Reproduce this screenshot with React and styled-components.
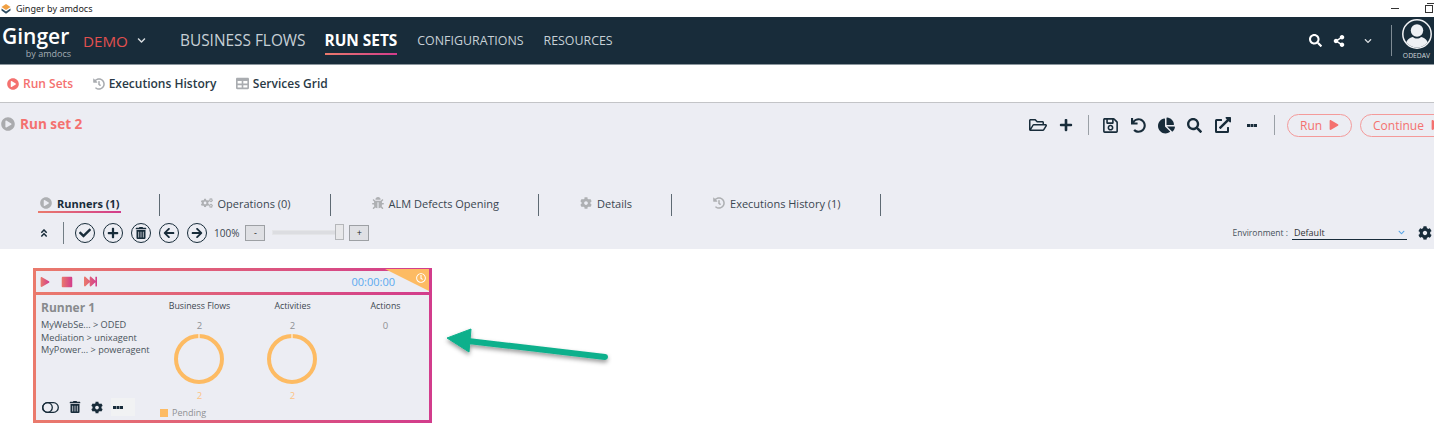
import React from 'react';
import styled, { createGlobalStyle } from 'styled-components';
import {
  FaSearch, FaShareAlt, FaPlay, FaPlus, FaUndo, FaChartPie, FaExternalLinkAlt,
  FaCog, FaCogs, FaBug, FaHistory, FaTable, FaPlayCircle, FaCheck, FaTrashAlt, FaArrowLeft,
  FaArrowRight, FaAngleDoubleUp, FaStop, FaFastForward, FaRegClock, FaRegFolderOpen, FaRegSave,
  FaChevronDown,
} from 'react-icons/fa';

const GRADIENT = 'linear-gradient(90deg, #ea7a6c, #d23c8c)';
const DARK = '#182c3a';
const CORAL = '#f4716f';

const GlobalStyle = createGlobalStyle`
  html, body {
    margin: 0;
    padding: 0;
    background: #fff;
    overflow: hidden;
  }
  body, button, select {
    font-family: "Open Sans", "Noto Sans", sans-serif;
  }
`;

const Page = styled.div`
  position: relative;
  width: 1434px;
  height: 445px;
  overflow: hidden;
  background: #fff;
`;

const TitleBar = styled.div`
  height: 17px;
  display: flex;
  align-items: center;
  padding-left: 1px;
  font-size: 9px;
  color: #222;
  font-family: "Noto Sans", sans-serif;
`;

const TitleText = styled.span`
  margin-left: 5px;
`;

const WindowControls = styled.div`
  margin-left: auto;
  display: flex;
  align-items: center;
  gap: 26px;
  padding-right: 1px;
`;

const Minimize = styled.span`
  width: 8px;
  height: 1px;
  background: #333;
`;

const Restore = styled.span`
  width: 6px;
  height: 6px;
  border: 1px solid #333;
  box-shadow: 1px -1px 0 0 #fff, 2px -2px 0 0 #333;
`;

const Nav = styled.header`
  height: 47px;
  background: ${DARK};
  border-bottom: 1px solid #8b969d;
  display: flex;
  align-items: center;
  color: #fff;
  padding-left: 2px;
`;

const Logo = styled.div`
  width: 69px;
  display: flex;
  flex-direction: column;
  align-items: flex-end;
  line-height: 1;
  padding-top: 3px;
`;

const LogoName = styled.span`
  align-self: flex-start;
  font-size: 21px;
  font-weight: 600;
  line-height: 22px;
`;

const LogoSub = styled.span`
  font-size: 9px;
  color: #a3adb4;
  line-height: 10px;
  margin-top: 2px;
`;

const Demo = styled.div`
  margin-left: 12px;
  width: 97px;
  display: flex;
  align-items: center;
  gap: 9px;
  font-size: 15.2px;
  color: #e2504f;
  svg {
    color: #d8dde0;
  }
`;

const NavLink = styled.a`
  position: relative;
  margin-right: ${p => p.$gap}px;
  font-size: ${p => p.$size}px;
  font-weight: ${p => (p.$active ? 700 : 400)};
  color: ${p => (p.$active ? '#fff' : '#c7d0d6')};
  line-height: 20px;
  white-space: nowrap;
  &::after {
    content: '';
    display: ${p => (p.$active ? 'block' : 'none')};
    position: absolute;
    left: 0;
    right: 0;
    bottom: -4px;
    height: 2px;
    background: ${GRADIENT};
  }
`;

const NavRight = styled.div`
  margin-left: auto;
  display: flex;
  align-items: center;
  height: 100%;
  color: #fff;
`;

const NavIcons = styled.div`
  display: flex;
  align-items: center;
  gap: 11px;
  padding-right: 19px;
  border-right: 1px solid #7e8b94;
  height: 31px;
`;

const NavChevron = styled.span`
  display: flex;
  margin-left: 8px;
  color: #d8dde0;
`;

const Profile = styled.div`
  width: 42px;
  box-sizing: border-box;
  padding-left: 7px;
  display: flex;
  flex-direction: column;
  align-items: center;
  height: 100%;
  font-size: 6.8px;
  color: #cfd6da;
  svg {
    margin-top: 2px;
    display: block;
    flex-shrink: 0;
  }
  span {
    line-height: 8px;
    margin-top: 3px;
  }
`;

const SubTabs = styled.nav`
  height: 37px;
  border-bottom: 1px solid #c3c4c7;
  display: flex;
  align-items: center;
  padding-left: 7px;
  gap: 19.5px;
  background: #fff;
`;

const SubTab = styled.a`
  display: flex;
  align-items: center;
  gap: 4px;
  font-size: 12px;
  font-weight: 600;
  color: ${p => (p.$active ? CORAL : '#2a3a46')};
  svg {
    color: ${p => (p.$active ? CORAL : '#a9acb0')};
  }
`;

const Panel = styled.section`
  height: 146px;
  background: #ecedf3;
  display: flex;
  flex-direction: column;
`;

const TitleRow = styled.div`
  height: 80px;
  display: flex;
  align-items: flex-start;
  padding: 10px 0 0 1px;
`;

const RunSetTitle = styled.h1`
  margin: 0 0 0 5px;
  font-size: 13.6px;
  font-weight: 700;
  color: ${CORAL};
  line-height: 22px;
`;

const TitleIcon = styled.span`
  display: flex;
  margin-top: 4px;
  color: #aaabae;
`;

const Toolbar = styled.div`
  margin-left: auto;
  display: flex;
  align-items: center;
  height: 24px;
  color: ${DARK};
  margin-right: -24px;
`;

const ToolIcon = styled.span`
  display: flex;
  justify-content: center;
  width: ${p => p.$w || 18}px;
  margin-right: ${p => p.$mr || 0}px;
`;

const ToolDivider = styled.span`
  width: 1px;
  height: 20px;
  background: #9aa0a6;
  margin: ${p => p.$m};
`;

const PillButton = styled.button`
  height: 23px;
  width: ${p => p.$w}px;
  margin-right: 8px;
  border: 1px solid #f49a9a;
  border-radius: 12px;
  background: transparent;
  color: ${CORAL};
  font-size: 12px;
  display: flex;
  align-items: center;
  gap: 7px;
  padding: 0 0 0 12px;
  flex-shrink: 0;
`;

const Tabs = styled.div`
  display: flex;
  height: 22px;
  padding-left: 38px;
  margin-top: 1px;
`;

const Tab = styled.div`
  display: flex;
  align-items: center;
  padding: 0 38px 4px 39px;
  border-right: 1px solid #5e6a73;
  &:first-child {
    padding: 0 38px 4px 0;
  }
`;

const TabLabel = styled.div`
  position: relative;
  display: flex;
  align-items: center;
  gap: 5px;
  font-size: 11px;
  font-weight: ${p => (p.$active ? 700 : 400)};
  color: ${p => (p.$active ? DARK : '#3a4650')};
  padding: 0 1px 0 2px;
  white-space: nowrap;
  svg {
    color: #aeb0b3;
  }
  &::after {
    content: '';
    display: ${p => (p.$active ? 'block' : 'none')};
    position: absolute;
    left: 0;
    right: 0;
    bottom: -2px;
    height: 2px;
    background: ${GRADIENT};
  }
`;

const ActionRow = styled.div`
  flex: 1;
  display: flex;
  align-items: center;
  padding: 0 2px 0 39px;
  color: ${DARK};
`;

const RowDivider = styled.span`
  width: 1px;
  height: 22px;
  background: #727d85;
  margin: 0 11px 0 14px;
`;

const CircleButton = styled.span`
  width: 18px;
  height: 18px;
  margin-right: 8px;
  border: 1px solid ${DARK};
  border-radius: 50%;
  display: flex;
  align-items: center;
  justify-content: center;
  flex-shrink: 0;
`;

const Zoom = styled.span`
  font-size: 10px;
  color: #39454f;
  margin: 0 6px 0 -1px;
`;

const ZoomButton = styled.span`
  width: 18px;
  height: 14px;
  background: #dfe0e4;
  border: 1px solid #9da0a4;
  display: flex;
  align-items: center;
  justify-content: center;
  font-size: 9px;
  color: #222;
`;

const SliderTrack = styled.span`
  position: relative;
  width: 65px;
  height: 3px;
  margin: 0 10px 0 7px;
  background: #dcdde1;
  border: 1px solid #e4e5e8;
`;

const SliderThumb = styled.span`
  position: absolute;
  right: -6px;
  top: -7px;
  width: 7px;
  height: 14px;
  background: #e8e8ea;
  border: 1px solid #b5b7ba;
`;

const Environment = styled.div`
  margin-left: auto;
  display: flex;
  align-items: center;
  font-size: 8.5px;
  color: #47525b;
`;

const EnvSelect = styled.div`
  width: 115px;
  height: 15px;
  margin: 0 11px 0 4px;
  border-bottom: 1px solid ${DARK};
  display: flex;
  align-items: center;
  justify-content: space-between;
  padding: 0 2px 0 2px;
  box-sizing: border-box;
  color: #333;
  font-size: 9px;
  svg {
    color: #5aa5e6;
  }
`;

const CardArea = styled.main`
  padding: 19px 0 0 33px;
`;

const Card = styled.article`
  width: 399px;
  height: 155px;
  box-sizing: border-box;
  padding: 3px;
  background: ${GRADIENT};
  display: flex;
  flex-direction: column;
  gap: 3px;
`;

const CardHeader = styled.div`
  position: relative;
  height: 21px;
  flex-shrink: 0;
  background: #ecedf3;
  display: flex;
  align-items: center;
  padding-left: 4px;
  gap: 11px;
`;

const RunTime = styled.span`
  margin-left: auto;
  margin-right: 34px;
  font-size: 11px;
  color: #5aa9f0;
  line-height: 19px;
`;

const Corner = styled.span`
  position: absolute;
  right: 0;
  top: -2px;
  width: 44px;
  height: 22px;
  background: #fdbb63;
  clip-path: polygon(0 0, 100% 0, 100% 100%);
  color: #fff;
  svg {
    position: absolute;
    right: 3px;
    top: 4px;
  }
`;

const CardBody = styled.div`
  flex: 1;
  background: #ecedf3;
  display: grid;
  grid-template-columns: 117px 93px 93px 93px;
  min-height: 0;
`;

const RunnerInfo = styled.div`
  display: flex;
  flex-direction: column;
  padding: 4px 0 0 5px;
`;

const RunnerName = styled.div`
  font-size: 12px;
  font-weight: 700;
  color: #888a8d;
  line-height: 18px;
  margin-bottom: 2px;
`;

const AgentLine = styled.div`
  font-size: 9.2px;
  line-height: 12.5px;
  color: #4a545c;
  white-space: nowrap;
`;

const RunnerActions = styled.div`
  margin-top: auto;
  margin-bottom: 4px;
  padding-left: 1px;
  display: flex;
  align-items: center;
  color: ${DARK};
`;

const ActionIcon = styled.span`
  display: flex;
  justify-content: center;
  width: ${p => p.$w}px;
  margin-right: ${p => p.$mr}px;
`;

const EllipsisBox = styled.span`
  display: flex;
  align-items: center;
  height: 18px;
  width: 24px;
  margin-left: -2px;
  padding-left: 2px;
  box-sizing: border-box;
  background: #f1f2f3;
`;

const StatColumn = styled.div`
  display: flex;
  flex-direction: column;
  align-items: center;
  min-width: 0;
`;

const StatTitle = styled.div`
  font-size: 8.8px;
  color: #3d4750;
  line-height: 13px;
  margin-top: 5px;
  white-space: nowrap;
`;

const StatCount = styled.div`
  font-size: 9.5px;
  color: ${p => p.$color || '#8f9194'};
  line-height: 13px;
  margin-top: ${p => p.$top}px;
`;

const Donut = styled.svg`
  display: block;
  margin: 2px 2px 0 0;
`;

const Legend = styled.div`
  align-self: flex-start;
  margin: 5px 0 0 7px;
  display: flex;
  align-items: center;
  gap: 4px;
  font-size: 9px;
  color: #8f9194;
  line-height: 12px;
`;

const LegendSwatch = styled.span`
  width: 8px;
  height: 8px;
  background: #fdbb63;
`;

const ArrowOverlay = styled.svg`
  position: absolute;
  left: 440px;
  top: 322px;
  overflow: visible;
`;

const StatDonut = () => (
  <Donut width="50" height="50" viewBox="0 0 50 50">
    <circle cx="25" cy="25" r="23" fill="none" stroke="#fdbb63" strokeWidth="4" />
    <rect x="24.5" y="0" width="1" height="4" fill="#fff" />
  </Donut>
);

const ToggleIcon = () => (
  <svg width="17" height="11" viewBox="0 0 17 11" fill="none" stroke={DARK} strokeWidth="1.3">
    <rect x="0.7" y="0.7" width="15.6" height="9.6" rx="4.8" />
    <circle cx="5.5" cy="5.5" r="4.8" />
  </svg>
);

const DashDots = () => (
  <svg width="10" height="3" viewBox="0 0 10 3" fill="currentColor">
    <rect x="0" y="0" width="3" height="3" />
    <rect x="3.5" y="0" width="3" height="3" />
    <rect x="7" y="0" width="3" height="3" />
  </svg>
);

const AvatarIcon = () => (
  <svg width="30" height="30" viewBox="0 0 30 30">
    <defs>
      <clipPath id="avatarClip"><circle cx="15" cy="15" r="13.5" /></clipPath>
    </defs>
    <circle cx="15" cy="15" r="14.2" fill="none" stroke="#f2f3f6" strokeWidth="1.5" />
    <g clipPath="url(#avatarClip)" fill="#eef0f4">
      <circle cx="15" cy="11.5" r="6.2" />
      <path d="M3 30 C3 21 8 18.5 11 18 C13 20 17 20 19 18 C22 18.5 27 21 27 30 Z" />
    </g>
  </svg>
);

const GingerMark = () => (
  <svg width="10" height="10" viewBox="0 0 10 10">
    <path d="M5 0 L9.5 3 L5 6 L0.5 3 Z" fill="#f0a043" />
    <path d="M0.5 4.5 L5 7.5 L9.5 4.5 L9.5 6.5 L5 9.8 L0.5 6.5 Z" fill="#2b4a5e" />
  </svg>
);

const GradientDefs = () => (
  <svg width="0" height="0" style={{ position: 'absolute' }}>
    <defs>
      <linearGradient id="cardIcon" x1="0" x2="1" y1="0" y2="0">
        <stop offset="0" stopColor="#ea7a6c" />
        <stop offset="1" stopColor="#d23c8c" />
      </linearGradient>
    </defs>
  </svg>
);

const tabs = [
  { label: 'Runners (1)', icon: <FaPlayCircle size={12} />, active: true },
  { label: 'Operations (0)', icon: <FaCogs size={12} /> },
  { label: 'ALM Defects Opening', icon: <FaBug size={12} /> },
  { label: 'Details', icon: <FaCog size={12} /> },
  { label: 'Executions History (1)', icon: <FaHistory size={12} /> },
];

const circleIcons = [FaCheck, FaPlus, FaTrashAlt, FaArrowLeft, FaArrowRight];

const agents = ['MyWebSe... > ODED', 'Mediation > unixagent', 'MyPower... > poweragent'];

export default function App() {
  return (
    <Page>
      <GlobalStyle />
      <GradientDefs />
      <TitleBar>
        <GingerMark />
        <TitleText>Ginger by amdocs</TitleText>
        <WindowControls>
          <Minimize />
          <Restore />
        </WindowControls>
      </TitleBar>

      <Nav>
        <Logo>
          <LogoName>Ginger</LogoName>
          <LogoSub>by amdocs</LogoSub>
        </Logo>
        <Demo>
          DEMO <FaChevronDown size={9} />
        </Demo>
        <NavLink $size={15.4} $gap={19}>BUSINESS FLOWS</NavLink>
        <NavLink $size={15.4} $gap={20} $active>RUN SETS</NavLink>
        <NavLink $size={12.4} $gap={20}>CONFIGURATIONS</NavLink>
        <NavLink $size={12.4} $gap={0}>RESOURCES</NavLink>
        <NavRight>
          <NavIcons>
            <FaSearch size={13} />
            <FaShareAlt size={12} />
            <NavChevron><FaChevronDown size={8} /></NavChevron>
          </NavIcons>
          <Profile>
            <AvatarIcon />
            <span>ODEDAV</span>
          </Profile>
        </NavRight>
      </Nav>

      <SubTabs>
        <SubTab $active><FaPlayCircle size={12} />Run Sets</SubTab>
        <SubTab><FaHistory size={12} />Executions History</SubTab>
        <SubTab><FaTable size={13} />Services Grid</SubTab>
      </SubTabs>

      <Panel>
        <TitleRow>
          <TitleIcon><FaPlayCircle size={14} /></TitleIcon>
          <RunSetTitle>Run set 2</RunSetTitle>
          <Toolbar>
            <ToolIcon $w={18} $mr={12}><FaRegFolderOpen size={18} /></ToolIcon>
            <ToolIcon $w={14}><FaPlus size={14} /></ToolIcon>
            <ToolDivider $m="0 14px 0 15px" />
            <ToolIcon $w={15} $mr={13}><FaRegSave size={17} /></ToolIcon>
            <ToolIcon $w={15} $mr={12}><FaUndo size={15} /></ToolIcon>
            <ToolIcon $w={17} $mr={12}><FaChartPie size={17} /></ToolIcon>
            <ToolIcon $w={15} $mr={12}><FaSearch size={15} /></ToolIcon>
            <ToolIcon $w={17} $mr={16}><FaExternalLinkAlt size={16} /></ToolIcon>
            <ToolIcon $w={10}><DashDots /></ToolIcon>
            <ToolDivider $m="0 12px 0 17px" />
            <PillButton $w={65}>Run <FaPlay size={10} /></PillButton>
            <PillButton $w={90}>Continue <FaPlay size={10} /></PillButton>
          </Toolbar>
        </TitleRow>

        <Tabs>
          {tabs.map(tab => (
            <Tab key={tab.label}>
              <TabLabel $active={tab.active}>{tab.icon}{tab.label}</TabLabel>
            </Tab>
          ))}
        </Tabs>

        <ActionRow>
          <FaAngleDoubleUp size={10} />
          <RowDivider />
          {circleIcons.map((Icon, i) => (
            <CircleButton key={i}><Icon size={12} /></CircleButton>
          ))}
          <Zoom>100%</Zoom>
          <ZoomButton>-</ZoomButton>
          <SliderTrack><SliderThumb /></SliderTrack>
          <ZoomButton>+</ZoomButton>
          <Environment>
            Environment :
            <EnvSelect>Default <FaChevronDown size={7} /></EnvSelect>
            <FaCog size={14} color={DARK} />
          </Environment>
        </ActionRow>
      </Panel>

      <CardArea>
        <Card>
          <CardHeader>
            <FaPlay size={10} fill="url(#cardIcon)" />
            <FaStop size={12} fill="url(#cardIcon)" />
            <FaFastForward size={13} fill="url(#cardIcon)" />
            <RunTime>00:00:00</RunTime>
            <Corner><FaRegClock size={10} /></Corner>
          </CardHeader>
          <CardBody>
            <RunnerInfo>
              <RunnerName>Runner 1</RunnerName>
              {agents.map(a => <AgentLine key={a}>{a}</AgentLine>)}
              <RunnerActions>
                <ActionIcon $w={17} $mr={10}><ToggleIcon /></ActionIcon>
                <ActionIcon $w={12} $mr={10}><FaTrashAlt size={12} /></ActionIcon>
                <ActionIcon $w={12} $mr={10}><FaCog size={13} /></ActionIcon>
                <EllipsisBox><DashDots /></EllipsisBox>
              </RunnerActions>
            </RunnerInfo>
            <StatColumn>
              <StatTitle>Business Flows</StatTitle>
              <StatCount $top={6}>2</StatCount>
              <StatDonut />
              <StatCount $top={5} $color="#fdc383">2</StatCount>
              <Legend><LegendSwatch />Pending</Legend>
            </StatColumn>
            <StatColumn>
              <StatTitle>Activities</StatTitle>
              <StatCount $top={6}>2</StatCount>
              <StatDonut />
              <StatCount $top={5} $color="#fdc383">2</StatCount>
            </StatColumn>
            <StatColumn>
              <StatTitle>Actions</StatTitle>
              <StatCount $top={6}>0</StatCount>
            </StatColumn>
          </CardBody>
        </Card>
      </CardArea>

      <ArrowOverlay width="170" height="50" viewBox="0 0 170 50">
        <defs>
          <filter id="arrowShadow" x="-10%" y="-30%" width="120%" height="180%">
            <feDropShadow dx="0" dy="2.5" stdDeviation="2" floodColor="#000" floodOpacity="0.4" />
          </filter>
        </defs>
        <g filter="url(#arrowShadow)" fill="#0fb08c" stroke="#0fb08c">
          <path d="M7 16 L31 7 L29 30 Z" strokeWidth="1" strokeLinejoin="round" />
          <path d="M28 19 L165 35" strokeWidth="6" strokeLinecap="round" fill="none" />
        </g>
      </ArrowOverlay>
    </Page>
  );
}
